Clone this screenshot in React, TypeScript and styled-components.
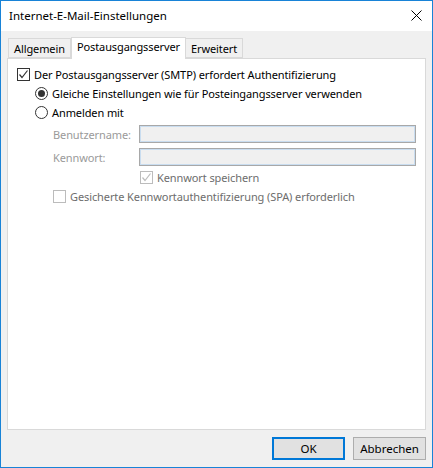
import React from 'react';
import styled, { createGlobalStyle } from 'styled-components';

const GlobalStyle = createGlobalStyle`
  html, body {
    margin: 0;
    padding: 0;
    background: #fff;
  }
  body {
    font-family: "Noto Sans", "Open Sans", sans-serif;
    font-size: 11px;
    letter-spacing: -0.1px;
  }
`;

const Window = styled.div`
  width: 433px;
  height: 468px;
  box-sizing: border-box;
  border: 1px solid #1883d7;
  display: flex;
  flex-direction: column;
  background: #f0f0f0;
`;

const TitleBar = styled.div`
  height: 30px;
  background: #fff;
  display: flex;
  align-items: center;
  justify-content: space-between;
  padding: 0 10px 1px 8px;
  box-sizing: border-box;
  color: #000;
  font-size: 11.5px;
  letter-spacing: 0;
`;

const CloseButton = styled.button`
  border: none;
  background: transparent;
  padding: 0;
  width: 12px;
  height: 12px;
  display: flex;
  align-items: center;
  justify-content: center;
`;

const Body = styled.div`
  flex: 1;
  display: flex;
  flex-direction: column;
  padding: 6px 6px 0 6px;
`;

const TabStrip = styled.div`
  display: flex;
  align-items: flex-end;
  height: 21px;
  padding-left: 2px;
  position: relative;
  z-index: 1;
`;

const Tab = styled.div<{ active?: boolean }>`
  box-sizing: border-box;
  height: ${({ active }) => (active ? '22px' : '20px')};
  margin-bottom: ${({ active }) => (active ? '-1px' : '0')};
  padding: ${({ active }) => (active ? '1px 5px 0 5px' : '1px 5px 0 5px')};
  border: 1px solid #d9d9d9;
  border-bottom: ${({ active }) => (active ? 'none' : '1px solid #d9d9d9')};
  background: ${({ active }) => (active ? '#fff' : '#f0f0f0')};
  margin-left: ${({ active }) => (active ? '0' : '-1px')};
  display: flex;
  align-items: ${({ active }) => (active ? 'flex-start' : 'center')};
  color: #000;
  white-space: nowrap;
`;

const Panel = styled.div`
  height: 372px;
  box-sizing: border-box;
  background: #fff;
  border: 1px solid #d9d9d9;
  padding: 9px 8px 0 9px;
  display: flex;
  flex-direction: column;
`;

const Row = styled.label<{ indent?: number; top?: number }>`
  display: flex;
  align-items: center;
  height: 13px;
  margin-left: ${({ indent }) => indent ?? 0}px;
  margin-top: ${({ top }) => top ?? 0}px;
  gap: 4px;
  white-space: nowrap;
`;

const RowText = styled.span<{ disabled?: boolean }>`
  color: ${({ disabled }) => (disabled ? '#6d6d6d' : '#000')};
  line-height: 13px;
`;

const Box = styled.span<{ disabled?: boolean }>`
  width: 13px;
  height: 13px;
  box-sizing: border-box;
  border: 1px solid ${({ disabled }) => (disabled ? '#bcbcbc' : '#333')};
  background: #fff;
  display: flex;
  align-items: center;
  justify-content: center;
  flex-shrink: 0;
`;

const RadioCircle = styled.span<{ checked?: boolean }>`
  width: 13px;
  height: 13px;
  box-sizing: border-box;
  border: 1px solid #333;
  border-radius: 50%;
  background: #fff;
  display: flex;
  align-items: center;
  justify-content: center;
  flex-shrink: 0;
  &::after {
    content: '';
    display: ${({ checked }) => (checked ? 'block' : 'none')};
    width: 7px;
    height: 7px;
    border-radius: 50%;
    background: #333;
  }
`;

const FieldRow = styled.div<{ top: number }>`
  display: flex;
  align-items: center;
  margin-left: 36px;
  margin-top: ${({ top }) => top}px;
  height: 18px;
`;

const FieldLabel = styled.span`
  width: 86px;
  color: #9a9a9a;
`;

const Field = styled.input`
  width: 277px;
  height: 18px;
  box-sizing: border-box;
  border: 1px solid #a8a8a8;
  box-shadow: inset 0 0 0 1px #c9ddf0;
  background: #f0f0f0;
  padding: 0;
  margin: 0;
  outline: none;
`;

const Footer = styled.div`
  display: flex;
  justify-content: flex-end;
  gap: 8px;
  padding-top: 7px;
`;

const Button = styled.button<{ primary?: boolean }>`
  width: 73px;
  height: 23px;
  box-sizing: border-box;
  border: ${({ primary }) => (primary ? '2px solid #0078d7' : '1px solid #adadad')};
  background: #e1e1e1;
  font-family: inherit;
  font-size: 11.5px;
  letter-spacing: 0;
  color: #000;
  padding: 0;
`;

const Check = ({ color }: { color: string }) => (
  <svg width="11" height="11" viewBox="0 0 11 11">
    <path d="M1.5 5.5 L4 8.5 L9.5 1.5" fill="none" stroke={color} strokeWidth="1.2" />
  </svg>
);

export default function App() {
  return (
    <>
      <GlobalStyle />
      <Window>
        <TitleBar>
          <span>Internet-E-Mail-Einstellungen</span>
          <CloseButton aria-label="Schließen">
            <svg width="11" height="11" viewBox="0 0 11 11">
              <path d="M0.5 0.5 L10.5 10.5 M10.5 0.5 L0.5 10.5" stroke="#000" strokeWidth="1" />
            </svg>
          </CloseButton>
        </TitleBar>
        <Body>
          <TabStrip>
            <Tab>Allgemein</Tab>
            <Tab active>Postausgangsserver</Tab>
            <Tab>Erweitert</Tab>
          </TabStrip>
          <Panel>
            <Row>
              <Box><Check color="#333" /></Box>
              <RowText>Der Postausgangsserver (SMTP) erfordert Authentifizierung</RowText>
            </Row>
            <Row indent={18} top={6}>
              <RadioCircle checked />
              <RowText>Gleiche Einstellungen wie für Posteingangsserver verwenden</RowText>
            </Row>
            <Row indent={18} top={6}>
              <RadioCircle />
              <RowText>Anmelden mit</RowText>
            </Row>
            <FieldRow top={6}>
              <FieldLabel>Benutzername:</FieldLabel>
              <Field disabled />
            </FieldRow>
            <FieldRow top={5}>
              <FieldLabel>Kennwort:</FieldLabel>
              <Field disabled />
            </FieldRow>
            <Row indent={123} top={5}>
              <Box disabled><Check color="#bcbcbc" /></Box>
              <RowText disabled>Kennwort speichern</RowText>
            </Row>
            <Row indent={36} top={6}>
              <Box disabled />
              <RowText disabled>Gesicherte Kennwortauthentifizierung (SPA) erforderlich</RowText>
            </Row>
          </Panel>
          <Footer>
            <Button primary>OK</Button>
            <Button>Abbrechen</Button>
          </Footer>
        </Body>
      </Window>
    </>
  );
}
